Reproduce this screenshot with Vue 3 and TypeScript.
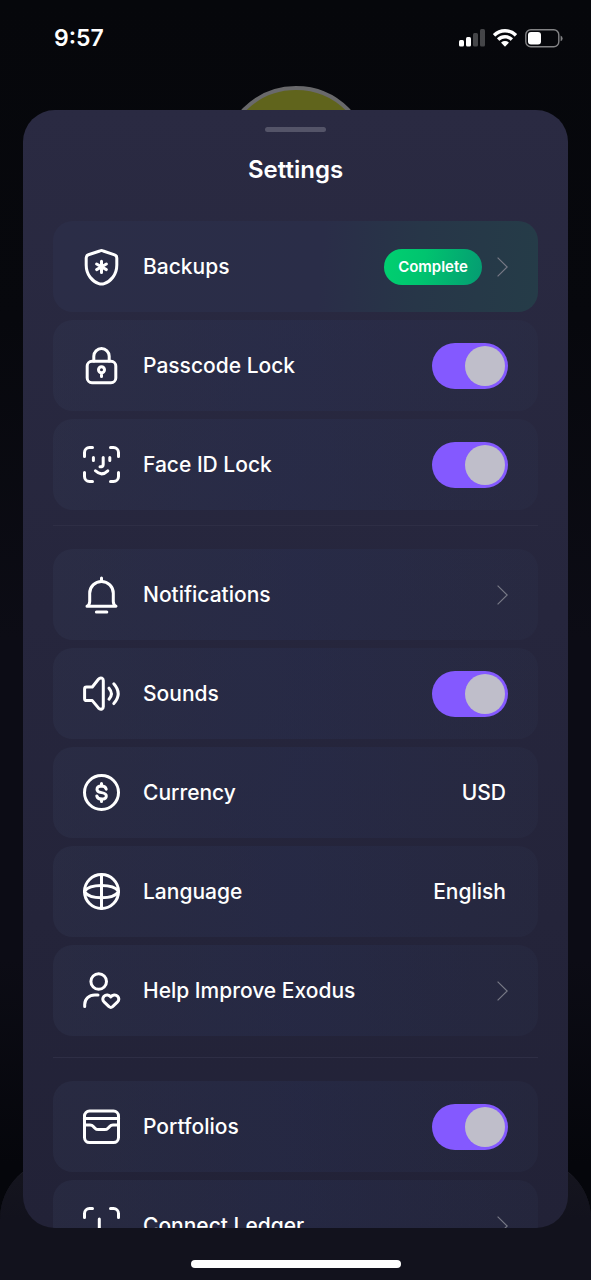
<script setup lang="ts">
import { reactive } from 'vue'

type Kind = 'link' | 'toggle' | 'value'

interface Item {
  id: string
  label: string
  kind: Kind
  icon: string[]
  value?: string
  badge?: string
}

const circle = 'M1.5 18.5a17 17 0 1 0 34 0a17 17 0 1 0 -34 0Z'
const corners = [
  'M1.5 10.5V6.5a5 5 0 0 1 5 -5H9.5',
  'M27.5 1.5H30.5a5 5 0 0 1 5 5V10.5',
  'M1.5 26.5V30.5a5 5 0 0 0 5 5H9.5',
  'M27.5 35.5H30.5a5 5 0 0 0 5 -5V26.5',
]

const groups: Item[][] = [
  [
    {
      id: 'backups',
      label: 'Backups',
      kind: 'link',
      badge: 'Complete',
      icon: [
        'M16.8 3Q18.5 2.2 20.2 3L31.6 6.8Q33.8 7.5 33.8 10V17C33.8 27 27.5 33.5 21.2 35.6Q18.5 36.6 15.8 35.6C9.5 33.5 3.2 27 3.2 17V10Q3.2 7.5 5.4 6.8Z',
        'M18.5 13.2V24.4M13.6 16L23.4 21.6M13.6 21.6L23.4 16',
      ],
    },
    {
      id: 'passcode',
      label: 'Passcode Lock',
      kind: 'toggle',
      icon: [
        'M9 14.3H28a4.8 4.8 0 0 1 4.8 4.8V30.9a4.8 4.8 0 0 1 -4.8 4.8H9a4.8 4.8 0 0 1 -4.8 -4.8V19.1a4.8 4.8 0 0 1 4.8 -4.8Z',
        'M10.8 14V9.3a7.7 7.7 0 0 1 15.4 0V14',
        'M15.5 22.8a3 3 0 1 0 6 0a3 3 0 1 0 -6 0ZM18.5 26V29.6',
      ],
    },
    {
      id: 'faceid',
      label: 'Face ID Lock',
      kind: 'toggle',
      icon: [...corners, 'M10.4 11.6V14.4M26.8 11.6V14.4', 'M20.2 11.6V18.4Q20.2 20.8 17 20.8', 'M12.4 24.8Q18.5 30.8 24.8 24.8'],
    },
  ],
  [
    {
      id: 'notifications',
      label: 'Notifications',
      kind: 'link',
      icon: ['M4 30.3Q6.7 28.6 6.7 25.5V17.2a11.8 11.8 0 0 1 23.6 0V25.5Q30.3 28.6 33 30.3Z', 'M18.5 2V5', 'M13.4 35.9H23.8'],
    },
    {
      id: 'sounds',
      label: 'Sounds',
      kind: 'toggle',
      icon: [
        'M3.5 12H9.3L15.4 4.3Q17 2.5 18.9 3.2Q20.3 3.8 20.3 5.4V31.8Q20.3 33.4 18.9 34Q17 34.7 15.4 32.9L9.3 25.6H3.5Q1.6 25.6 1.6 23.7V13.9Q1.6 12 3.5 12Z',
        'M26 13.2Q30.8 18.7 26 24.2',
        'M30.8 8.8Q39.6 18.7 30.8 28.6',
      ],
    },
    {
      id: 'currency',
      label: 'Currency',
      kind: 'value',
      value: 'USD',
      icon: [
        circle,
        'M18.5 9.5V12M18.5 25.2V27.6',
        'M23.2 15.2C22.6 13 20.8 12.1 18.5 12.1C15.9 12.1 14 13.3 14 15.4C14 17.6 16 18.1 18.5 18.6C21.2 19.1 23.3 19.6 23.3 21.9C23.3 24 21.2 25.1 18.5 25.1C15.8 25.1 14.2 24 13.8 21.9',
      ],
    },
    {
      id: 'language',
      label: 'Language',
      kind: 'value',
      value: 'English',
      icon: [circle, 'M18.5 1.5V35.5', 'M1.6 18.2C7 10.6 30 10.6 35.4 18.2', 'M1.6 18.8C7 26.6 30 26.6 35.4 18.8'],
    },
    {
      id: 'improve',
      label: 'Help Improve Exodus',
      kind: 'link',
      icon: [
        'M7.9 9.5a7.8 7.8 0 1 0 15.6 0a7.8 7.8 0 1 0 -15.6 0Z',
        'M1.7 34.6V32.5C1.7 26.8 6.2 23 11.8 23H15',
        'M27.8 25C26.2 22.6 22.8 22.4 21 24.3C19.3 26.3 19.6 28.6 21.3 30.2L26 34.7Q27.8 36.2 29.6 34.7L34.3 30.2C36 28.6 36.3 26.3 34.6 24.3C32.8 22.4 29.4 22.6 27.8 25Z',
      ],
    },
  ],
  [
    {
      id: 'portfolios',
      label: 'Portfolios',
      kind: 'toggle',
      icon: [
        'M6.5 3H30.5a5 5 0 0 1 5 5V29.6a5 5 0 0 1 -5 5H6.5a5 5 0 0 1 -5 -5V8a5 5 0 0 1 5 -5Z',
        'M1.5 10.6H35.5',
        'M1.5 17H7Q9 17 10.4 18.6L12 20.2Q13.3 21.6 15.3 21.6H21.7Q23.7 21.6 25 20.2L26.6 18.6Q28 17 30 17H35.5',
      ],
    },
    {
      id: 'ledger',
      label: 'Connect Ledger',
      kind: 'link',
      icon: [...corners, 'M16.3 12V25H22.5'],
    },
  ],
]

const enabled = reactive<Record<string, boolean>>({
  passcode: true,
  faceid: true,
  sounds: true,
  portfolios: true,
})
</script>

<template>
  <div class="screen">
    <div class="avatar"></div>
    <div class="dock"></div>

    <header class="status">
      <time class="clock">9:57</time>
      <div class="signals">
        <svg class="cell" viewBox="0 0 26 18" aria-hidden="true">
          <rect x="0" y="11" width="5" height="6.5" rx="1.5" />
          <rect x="7" y="8" width="5" height="9.5" rx="1.5" />
          <rect x="14" y="4" width="5" height="13.5" rx="1.5" opacity=".25" />
          <rect x="21" y="0" width="5" height="17.5" rx="1.5" opacity=".25" />
        </svg>
        <svg class="wifi" viewBox="0 0 24 18" aria-hidden="true">
          <path d="M12 0C7.4 0 3.2 1.8 .2 4.7Q-.2 5.1 .2 5.5L1.9 7.2Q2.3 7.6 2.7 7.2C5.1 4.9 8.4 3.5 12 3.5S18.9 4.9 21.3 7.2Q21.7 7.6 22.1 7.2L23.8 5.5Q24.2 5.1 23.8 4.7C20.8 1.8 16.6 0 12 0Z" />
          <path d="M12 6C9 6 6.3 7.1 4.3 9Q3.9 9.4 4.3 9.8L6 11.5Q6.4 11.9 6.8 11.5C8.2 10.2 10 9.5 12 9.5S15.8 10.2 17.2 11.5Q17.6 11.9 18 11.5L19.7 9.8Q20.1 9.4 19.7 9C17.7 7.1 15 6 12 6Z" />
          <path d="M12 12Q9.9 12 8.4 13.2Q8 13.6 8.4 14L11.5 17.2Q12 17.7 12.5 17.2L15.6 14Q16 13.6 15.6 13.2Q14.1 12 12 12Z" />
        </svg>
        <svg class="battery" viewBox="0 0 38 19" aria-hidden="true">
          <rect x=".8" y=".8" width="33" height="17" rx="5" fill="none" stroke="#fff" stroke-width="1.4" opacity=".5" />
          <rect x="3" y="3" width="13" height="12.6" rx="3" />
          <path d="M35.6 6.5Q37.6 7.4 37.6 9.4T35.6 12.3Z" opacity=".5" />
        </svg>
      </div>
    </header>

    <main class="sheet">
      <div class="handle"></div>
      <h1 class="title">Settings</h1>

      <section v-for="(group, g) in groups" :key="g" class="group">
        <component
          :is="item.kind === 'toggle' ? 'label' : 'button'"
          v-for="item in group"
          :key="item.id"
          class="row"
          :class="{ done: item.badge }"
          :type="item.kind === 'toggle' ? undefined : 'button'"
          :for="item.kind === 'toggle' ? item.id : undefined"
        >
          <svg class="icon" viewBox="0 0 37 37" aria-hidden="true">
            <path v-for="(d, i) in item.icon" :key="i" :d="d" />
          </svg>
          <span class="label">{{ item.label }}</span>
          <input
            v-if="item.kind === 'toggle'"
            :id="item.id"
            v-model="enabled[item.id]"
            class="toggle"
            type="checkbox"
          />
          <span v-if="item.badge" class="badge">{{ item.badge }}</span>
          <span v-if="item.value" class="value">{{ item.value }}</span>
          <svg v-if="item.kind === 'link'" class="chevron" viewBox="0 0 11 20" aria-hidden="true">
            <path d="M.6 .6L10.2 10L.6 19.4" />
          </svg>
        </component>
      </section>
    </main>

    <footer class="home"><div class="home-bar"></div></footer>
  </div>
</template>

<style>
body {
  margin: 0;
  background: #06070c;
}
</style>

<style scoped>
.screen {
  position: relative;
  display: flex;
  flex-direction: column;
  height: 100vh;
  overflow: hidden;
  box-sizing: border-box;
  background: linear-gradient(#06070b 0%, #07080d 25%, #0c0c15 50%, #0c0c15 75%, #05060b 91%);
  color: #fff;
  font-family: Inter, "Liberation Sans", sans-serif;
}
.avatar {
  position: absolute;
  top: 86px;
  left: 50%;
  width: 150px;
  height: 150px;
  transform: translateX(-50%);
  box-sizing: border-box;
  border: 4px solid #69696b;
  border-radius: 50%;
  background: #60641c;
}
.dock {
  position: absolute;
  right: 0;
  bottom: 0;
  left: 0;
  height: 121px;
  box-sizing: border-box;
  border-top: 1px solid #1d1d27;
  border-radius: 60px 60px 0 0;
  background: linear-gradient(#15151e, #12121d 50%);
}
.status {
  display: flex;
  flex: none;
  align-items: center;
  justify-content: space-between;
  height: 76px;
  margin-bottom: 34px;
  padding: 0 28px 0 54px;
}
.clock {
  font-size: 23px;
  font-weight: 600;
  line-height: 28px;
}
.signals {
  display: flex;
  align-items: center;
  gap: 8px;
}
.signals svg {
  display: block;
  fill: #fff;
}
.cell {
  width: 26px;
  height: 18px;
}
.wifi {
  width: 24px;
  height: 18px;
}
.battery {
  width: 38px;
  height: 19px;
}
.sheet {
  position: relative;
  display: flex;
  flex: 1;
  flex-direction: column;
  min-height: 0;
  margin: 0 23px;
  padding: 17px 30px 0;
  overflow: hidden auto;
  scrollbar-width: none;
  border-radius: 32px;
  background: linear-gradient(#2a2a42, #26263d 45%, #222237);
}
.handle {
  flex: none;
  align-self: center;
  width: 61px;
  height: 5px;
  border-radius: 3px;
  background: #545468;
}
.title {
  flex: none;
  margin: 22px 0 36px;
  font-size: 24px;
  font-weight: 600;
  line-height: 31px;
  text-align: center;
}
.group {
  display: flex;
  flex: none;
  flex-direction: column;
  gap: 8px;
}
.group + .group {
  margin-top: 21px;
  padding-top: 23px;
  border-top: 1px solid #2e2e45;
}
.group:nth-of-type(2) {
  margin-top: 15px;
}
.row {
  display: flex;
  align-items: center;
  width: 100%;
  height: 91px;
  margin: 0;
  padding: 0 30px;
  box-sizing: border-box;
  border: 0;
  border-radius: 20px;
  background: linear-gradient(95deg, rgba(50, 56, 82, .34), rgba(42, 50, 86, .36) 50%, rgba(46, 54, 80, .2));
  color: inherit;
  font: inherit;
  text-align: left;
  cursor: pointer;
}
.row.done {
  background: linear-gradient(95deg, #2b2d47 0%, #2a2d48 55%, #273648 75%, #253c48 100%);
}
.icon {
  flex: none;
  width: 37px;
  height: 37px;
  margin-right: 23px;
  overflow: visible;
  fill: none;
  stroke: #fff;
  stroke-width: 3;
  stroke-linecap: round;
  stroke-linejoin: round;
}
.label {
  flex: 1;
  font-size: 21px;
  font-weight: 500;
  line-height: 28px;
}
.value {
  font-size: 21px;
  font-weight: 500;
  line-height: 28px;
  padding-right: 2px;
}
.badge {
  padding: 0 14px;
  border-radius: 18px;
  background: linear-gradient(100deg, #00d070, #00c46f 40%, #059c72);
  font-size: 15px;
  font-weight: 600;
  line-height: 36px;
}
.chevron {
  flex: none;
  width: 11px;
  height: 20px;
  margin-left: 15px;
  fill: none;
  stroke: #777986;
  stroke-width: 1.2;
}
.toggle {
  flex: none;
  width: 76px;
  height: 46px;
  margin: 0;
  padding: 3px;
  box-sizing: border-box;
  appearance: none;
  border-radius: 23px;
  background: #45465c;
  cursor: pointer;
}
.toggle::before {
  content: "";
  display: block;
  width: 40px;
  height: 40px;
  border-radius: 50%;
  background: #bfbeca;
}
.toggle:checked {
  background: #8459ff;
}
.toggle:checked::before {
  margin-left: auto;
}
.home {
  position: relative;
  display: flex;
  flex: none;
  justify-content: center;
  height: 20px;
  padding-top: 32px;
}
.home-bar {
  width: 210px;
  height: 8px;
  border-radius: 4px;
  background: #fff;
}
</style>
